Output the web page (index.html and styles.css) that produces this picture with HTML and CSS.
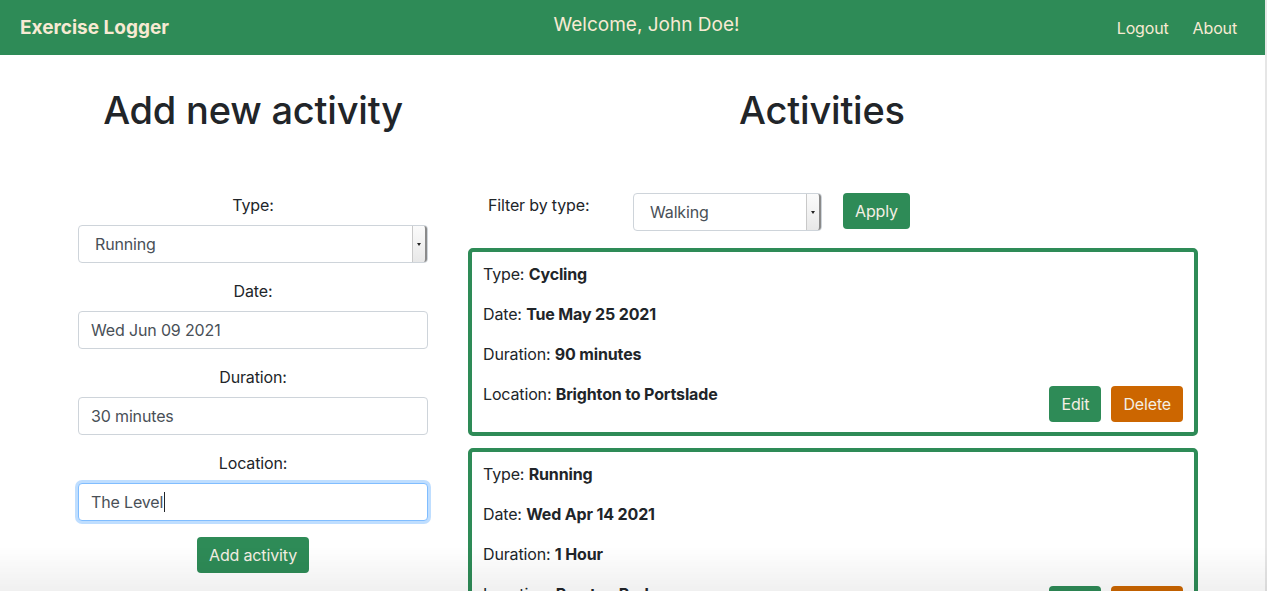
FILE: index.html
```html
<!DOCTYPE html>
<html lang="en">
<head>
<meta charset="utf-8">
<title>Exercise Logger</title>
<link rel="stylesheet" href="styles.css">
</head>
<body>
<div class="page">
  <nav class="navbar">
    <span class="brand">Exercise Logger</span>
    <span class="welcome">Welcome, John Doe!</span>
    <div class="nav-links">
      <a class="nav-link" href="#">Logout</a>
      <a class="nav-link" href="#">About</a>
    </div>
  </nav>
  <main class="main">
    <section class="col-left">
      <h1 class="heading">Add new activity</h1>
      <form class="form">
        <div class="group">
          <label class="label">Type:</label>
          <div class="select-wrap">
            <div class="select">Running</div>
            <span class="select-arrow"></span>
          </div>
        </div>
        <div class="group">
          <label class="label">Date:</label>
          <input class="input" type="text" value="Wed Jun 09 2021">
        </div>
        <div class="group">
          <label class="label">Duration:</label>
          <input class="input" type="text" value="30 minutes">
        </div>
        <div class="group">
          <label class="label">Location:</label>
          <div class="input is-focused">The Level<span class="caret"></span></div>
        </div>
        <div class="form-actions">
          <button type="button" class="btn btn-green">Add activity</button>
        </div>
      </form>
    </section>
    <section class="col-right">
      <h1 class="heading heading-right">Activities</h1>
      <div class="filter">
        <span class="filter-label">Filter by type:</span>
        <div class="select-wrap filter-select">
          <div class="select">Walking</div>
          <span class="select-arrow"></span>
        </div>
        <button type="button" class="btn btn-green">Apply</button>
      </div>
      <div class="cards">
        <div class="card">
          <div class="card-info">
            <p>Type: <b>Cycling</b></p>
            <p>Date: <b>Tue May 25 2021</b></p>
            <p>Duration: <b>90 minutes</b></p>
            <p>Location: <b>Brighton to Portslade</b></p>
          </div>
          <div class="card-actions">
            <button type="button" class="btn btn-green">Edit</button>
            <button type="button" class="btn btn-orange">Delete</button>
          </div>
        </div>
        <div class="card">
          <div class="card-info">
            <p>Type: <b>Running</b></p>
            <p>Date: <b>Wed Apr 14 2021</b></p>
            <p>Duration: <b>1 Hour</b></p>
            <p>Location: <b>Preston Park</b></p>
          </div>
          <div class="card-actions">
            <button type="button" class="btn btn-green">Edit</button>
            <button type="button" class="btn btn-orange">Delete</button>
          </div>
        </div>
      </div>
    </section>
  </main>
</div>
<div class="bottom-shade"></div>
</body>
</html>
```

FILE: styles.css
```css
html {
  background: #e6e6e6;
}
body {
  margin: 0;
  font-family: Inter, "Liberation Sans", sans-serif;
  font-size: 16px;
  line-height: 24px;
  letter-spacing: -0.15px;
  color: #212529;
  overflow: hidden;
  height: 591px;
}
.page {
  width: 1265px;
  height: 591px;
  background: #fff;
  overflow: hidden;
}
.navbar {
  height: 55px;
  background: #2e8b57;
  display: flex;
  align-items: center;
  justify-content: space-between;
  padding: 0 28px 0 20px;
  color: #f7ead3;
}
.brand {
  font-size: 19px;
  font-weight: 700;
  letter-spacing: 0;
  width: 300px;
  margin-top: 1px;
}
.welcome {
  font-size: 19px;
  letter-spacing: 0;
  margin-top: -5px;
  margin-left: 36px;
}
.nav-links {
  width: 300px;
  display: flex;
  justify-content: flex-end;
  gap: 24px;
}
.nav-link {
  color: #f7ead3;
  text-decoration: none;
  font-size: 16px;
}
.main {
  display: flex;
  gap: 40px;
  padding-left: 78px;
}
.col-left {
  width: 350px;
}
.col-right {
  width: 730px;
}
.heading {
  margin: 31px 0 59px;
  font-size: 38px;
  font-weight: 500;
  letter-spacing: -0.2px;
  line-height: 48px;
  text-align: center;
}
.heading-right {
  padding-right: 22px;
}
.form {
  display: flex;
  flex-direction: column;
  gap: 16px;
}
.group {
  display: flex;
  flex-direction: column;
  gap: 8px;
}
.label {
  text-align: center;
}
.input, .select {
  box-sizing: border-box;
  width: 100%;
  height: 38px;
  border: 1px solid #ced4da;
  border-radius: 4px;
  padding: 6px 12px;
  font: inherit;
  letter-spacing: inherit;
  color: #495057;
  background: #fff;
  outline: none;
}
.input.is-focused {
  border-color: #80bdff;
  box-shadow: 0 0 0 3px rgba(0, 123, 255, 0.25);
  display: flex;
  align-items: center;
}
.caret {
  display: inline-block;
  width: 1px;
  height: 20px;
  margin-left: 1px;
  background: #212529;
}
.select-wrap {
  position: relative;
}
.select {
  padding-left: 16px;
}
.select-arrow {
  position: absolute;
  top: 1px;
  right: 1px;
  width: 12px;
  height: 36px;
  background: linear-gradient(#fbfbfb, #e8e8e8);
  border-left: 1px solid #c9c9c9;
  border-right: 2px solid #8a8a8a;
  border-radius: 0 3px 3px 0;
}
.select-arrow::after {
  content: "";
  position: absolute;
  left: 4px;
  top: 17px;
  border-left: 2.5px solid transparent;
  border-right: 2.5px solid transparent;
  border-top: 3px solid #222;
}
.form-actions {
  display: flex;
  justify-content: center;
}
.btn {
  border: 0;
  border-radius: 4px;
  padding: 6px 12px;
  font: inherit;
  letter-spacing: inherit;
  line-height: 24px;
  color: #f4efe4;
  cursor: pointer;
}
.btn-green {
  background: #2e8b57;
}
.btn-orange {
  background: #cc6600;
}
.filter {
  display: flex;
  align-items: flex-start;
  padding-left: 20px;
  margin-bottom: 17px;
}
.filter-label {
  width: 145px;
}
.filter-select {
  width: 189px;
  margin-right: 21px;
}
.cards {
  display: flex;
  flex-direction: column;
  gap: 12px;
}
.card {
  border: 4px solid #2e8b57;
  border-radius: 5px;
  padding: 10px 11px 10px 11px;
  display: flex;
  justify-content: space-between;
  align-items: flex-end;
}
.card-info p {
  margin: 0 0 16px;
}
.card-actions {
  display: flex;
  gap: 10px;
}
.bottom-shade {
  position: fixed;
  left: 0;
  right: 0;
  bottom: 0;
  height: 45px;
  pointer-events: none;
  background: linear-gradient(rgba(0, 0, 0, 0), rgba(0, 0, 0, 0.06));
}
```
